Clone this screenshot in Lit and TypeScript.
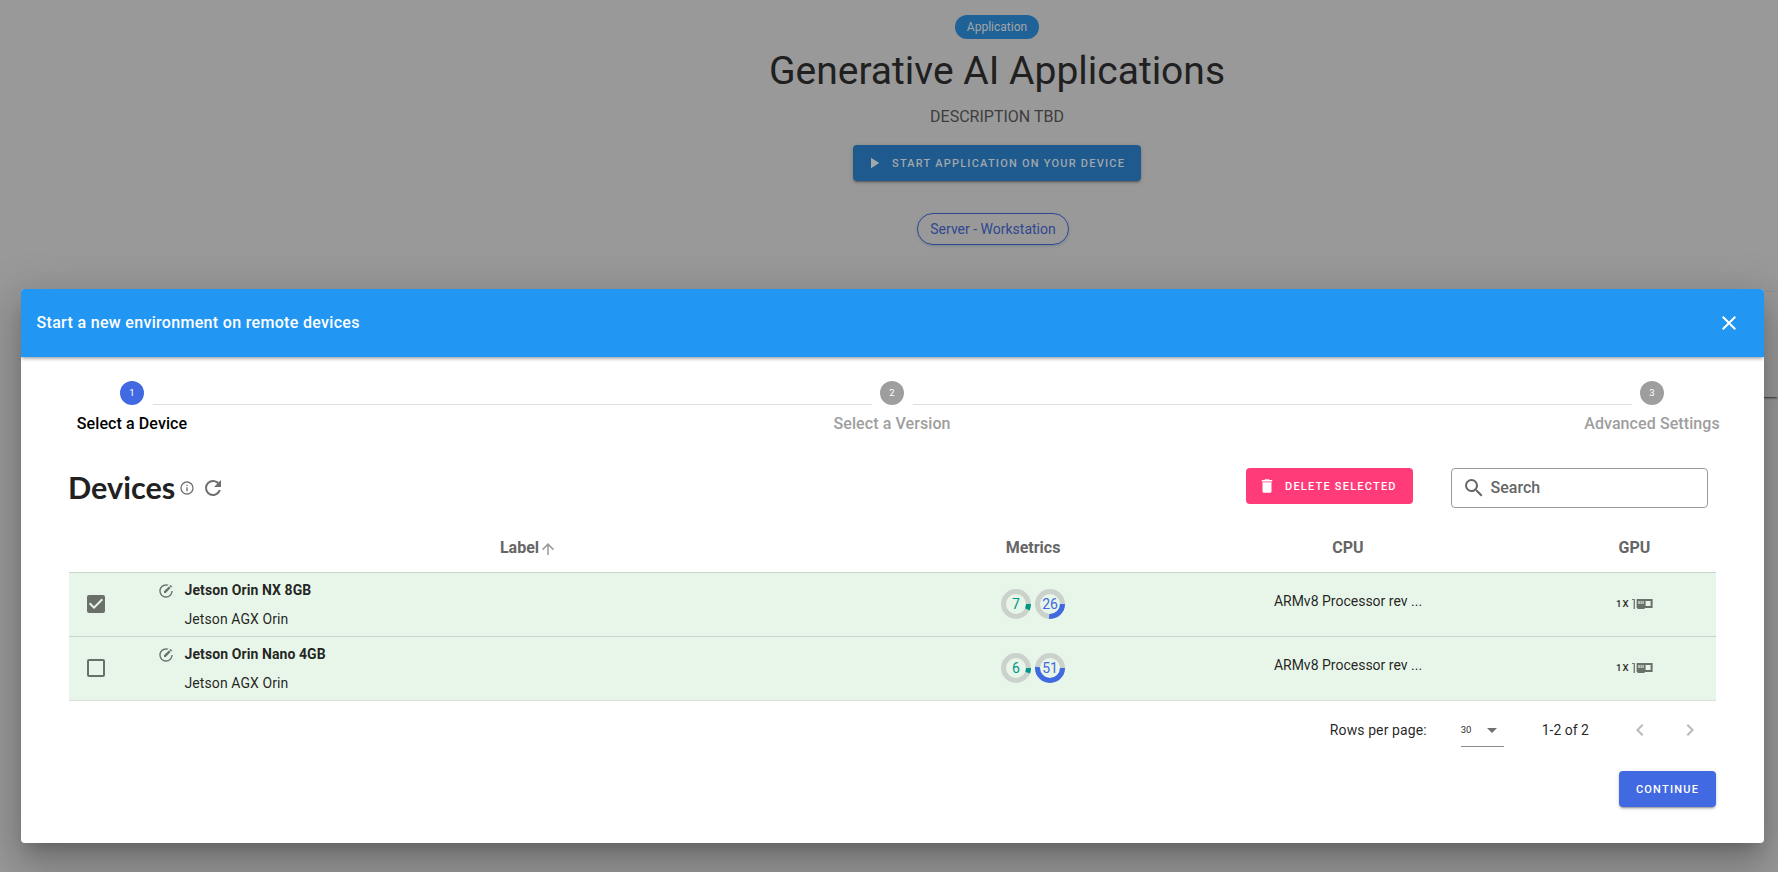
import { LitElement, html, css, svg } from "lit";
import { customElement } from "lit/decorators.js";

const icons = {
  play: "M8,5.14V19.14L19,12.14L8,5.14Z",
  close: "M19,6.41L17.59,5L12,10.59L6.41,5L5,6.41L10.59,12L5,17.59L6.41,19L12,13.41L17.59,19L19,17.59L13.41,12L19,6.41Z",
  info: "M11,9H13V7H11M12,20C7.59,20 4,16.41 4,12C4,7.59 7.59,4 12,4C16.41,4 20,7.59 20,12C20,16.41 16.41,20 12,20M12,2A10,10 0 0,0 2,12A10,10 0 0,0 12,22A10,10 0 0,0 22,12A10,10 0 0,0 12,2M11,17H13V11H11V17Z",
  refresh: "M17.65,6.35C16.2,4.9 14.21,4 12,4A8,8 0 0,0 4,12A8,8 0 0,0 12,20C15.73,20 18.84,17.45 19.73,14H17.65C16.83,16.33 14.61,18 12,18A6,6 0 0,1 6,12A6,6 0 0,1 12,6C13.66,6 15.14,6.69 16.22,7.78L13,11H20V4L17.65,6.35Z",
  trash: "M19,4H15.5L14.5,3H9.5L8.5,4H5V6H19M6,19A2,2 0 0,0 8,21H16A2,2 0 0,0 18,19V7H6V19Z",
  search: "M9.5,3A6.5,6.5 0 0,1 16,9.5C16,11.11 15.41,12.59 14.44,13.73L14.71,14H15.5L20.5,19L19,20.5L14,15.5V14.71L13.73,14.44C12.59,15.41 11.11,16 9.5,16A6.5,6.5 0 0,1 3,9.5A6.5,6.5 0 0,1 9.5,3M9.5,5C7,5 5,7 5,9.5C5,12 7,14 9.5,14C12,14 14,12 14,9.5C14,7 12,5 9.5,5Z",
  up: "M13,20H11V8L5.5,13.5L4.08,12.08L12,4.16L19.92,12.08L18.5,13.5L13,8V20Z",
  checked: "M10,17L5,12L6.41,10.58L10,14.17L17.59,6.58L19,8M19,3H5C3.89,3 3,3.89 3,5V19A2,2 0 0,0 5,21H19A2,2 0 0,0 21,19V5C21,3.89 20.1,3 19,3Z",
  blank: "M19,3H5C3.89,3 3,3.89 3,5V19A2,2 0 0,0 5,21H19A2,2 0 0,0 21,19V5C21,3.89 20.1,3 19,3M19,5V19H5V5H19Z",
  edit: "M12,2C6.47,2 2,6.47 2,12C2,17.53 6.47,22 12,22C17.53,22 22,17.53 22,12H20C20,16.42 16.42,20 12,20C7.58,20 4,16.42 4,12C4,7.58 7.58,4 12,4C12.76,4 13.5,4.11 14.2,4.31L15.77,2.74C14.61,2.26 13.34,2 12,2M18.78,3C18.61,3 18.43,3.07 18.3,3.2L17.08,4.41L19.58,6.91L20.8,5.7C21.06,5.44 21.06,5 20.8,4.75L19.25,3.2C19.12,3.07 18.95,3 18.78,3M16.37,5.12L9,12.5V15H11.5L18.87,7.62L16.37,5.12Z",
  down: "M7,10L12,15L17,10H7Z",
  left: "M15.41,16.58L10.83,12L15.41,7.41L14,6L8,12L14,18L15.41,16.58Z",
  right: "M8.59,16.58L13.17,12L8.59,7.41L10,6L16,12L10,18L8.59,16.58Z",
};

const icon = (name: keyof typeof icons, size = 24, cls = "") => html`
  <svg class="icon ${cls}" width=${size} height=${size} viewBox="0 0 24 24"><path d=${icons[name]} /></svg>`;

const gpuCard = () => html`
  <svg class="icon gpu" width="21" height="10" viewBox="0 0 21 10">
    <path d="M0 0H3V10H1.6V1H0Z" opacity=".9" />
    <path fill-rule="evenodd" d="M4.6 0H20.6V9H12.6V10H5.4V9H4.6ZM6.4 2V5H7.6V2ZM8.6 2V5H9.6V2ZM10.6 2V5H11.6V2ZM13.6 2V7H18.6V2Z" />
  </svg>`;

const ring = (value: number, cls: string) => {
  const r = 12.5;
  const len = 2 * Math.PI * r;
  return html`<span class="ring ${cls}">
    <svg width="30" height="30" viewBox="0 0 30 30">
      ${svg`<circle class="track" cx="15" cy="15" r=${r} />
      <circle class="value" cx="15" cy="15" r=${r} stroke-dasharray="${(len * value) / 100} ${len}" />`}
    </svg><span class="num">${value}</span></span>`;
};

interface Device { name: string; model: string; checked: boolean; cpu: number; mem: number; }

const devices: Device[] = [
  { name: "Jetson Orin NX 8GB", model: "Jetson AGX Orin", checked: true, cpu: 7, mem: 26 },
  { name: "Jetson Orin Nano 4GB", model: "Jetson AGX Orin", checked: false, cpu: 6, mem: 51 },
];

@customElement("app-root")
export class AppRoot extends LitElement {
  static styles = css`
    :host { display: block; position: relative; height: 872px; overflow: hidden; background: #999;
      font-family: Roboto, sans-serif; color: rgba(0,0,0,.87); font-size: 16px; line-height: 24px; }
    * { box-sizing: border-box; }
    .icon { display: block; fill: currentColor; flex: none; }
    .page { display: flex; flex-direction: column; align-items: center; width: 454px; margin-left: 770px; padding-top: 15px; }
    .chip { height: 24px; border-radius: 12px; padding: 0 12px; background: #1f6298; color: #a5a5a5; font-size: 12px; }
    .title { margin: 8px 0 0; font-size: 39px; line-height: 48px; font-weight: 400; color: #202020; white-space: nowrap; }
    .desc { margin: 10px 0 0; color: #3d3d3d; }
    .btn { display: flex; align-items: center; height: 36px; border-radius: 4px; font-size: 11px; font-weight: 500;
      letter-spacing: 1.22px; text-transform: uppercase; white-space: nowrap; }
    .btn span { padding-top: 1px; }
    .raised { box-shadow: 0 3px 1px -2px rgba(0,0,0,.2), 0 2px 2px 0 rgba(0,0,0,.14), 0 1px 5px 0 rgba(0,0,0,.12); }
    .start { width: 288px; margin-top: 16px; padding-left: 12px; gap: 9px; background: #1e5a8d; color: #a0a7ad; }
    .tag { height: 32px; margin: 32px 8px 0 0; padding: 0 12.5px; border: 1px solid #304790; border-radius: 16px; color: #304790;
      font-size: 14px; line-height: 30px; box-shadow: 0 1px 3px rgba(0,80,110,.25); }
    .behind { position: absolute; right: 0; top: 292px; width: 120px; height: 105px; background: #999;
      box-shadow: 0 3px 1px -2px rgba(0,0,0,.3), 0 2px 2px rgba(0,0,0,.2), 0 0 2px rgba(0,0,0,.15); }
    .dialog { position: absolute; left: 21px; top: 289px; width: 1743px; height: 554px; border-radius: 4px; overflow: hidden;
      background: #fff; }
    .shade { position: absolute; left: 21px; top: 289px; width: 1743px; height: 554px; border-radius: 4px;
      box-shadow: 0 11px 15px -7px rgba(0,0,0,.2), 0 24px 38px 3px rgba(0,0,0,.14), 0 9px 46px 8px rgba(0,0,0,.12); }
    .bar { position: relative; display: flex; align-items: center; justify-content: space-between; height: 68px; padding: 0 22.6px 0 15.5px;
      background: #2196f3; color: #fff; box-shadow: 0 2px 4px -1px rgba(0,0,0,.3), 0 1px 4px rgba(0,0,0,.2); }
    .heading { font-size: 16px; font-weight: 500; letter-spacing: .32px; }
    .steps { display: flex; justify-content: space-between; margin: 24px 24.5px 0 23.5px; }
    .step { width: 175px; flex: none; display: flex; flex-direction: column; align-items: center; color: #9e9e9e; font-weight: 500; gap: 7px; white-space: nowrap; letter-spacing: .09px; }
    .dot { width: 24px; height: 24px; border-radius: 50%; background: #9e9e9e; color: #fff; font-size: 9.6px; font-weight: 400; text-align: center; line-height: 23px; }
    .active { color: #000; }
    .active .dot { background: #4169e1; }
    .line { flex: 1; height: 1px; margin: 23px -67px 0; background: #dedede; }
    .body { padding: 0 48px; }
    .tools { display: flex; align-items: flex-start; height: 55px; margin-top: 32px; }
    .h1 { margin: 0 0 0 -1px; font: 700 30.6px/36px Lato, sans-serif; color: #212121; padding-top: 2px; }
    .grey { color: #6f6f6f; }
    .i1 { margin: 12px 0 0 3.5px; }
    .i2 { margin: 8px 0 0 6px; }
    .delete { margin-left: auto; width: 167px; padding-left: 12px; gap: 9px; background: #ff3b79; color: #fff; }
    .search { display: flex; align-items: center; gap: 5px; width: 257px; height: 40px; margin: 0 8px 0 38px; padding-left: 9.5px;
      border: 1px solid #999; border-radius: 4px; color: #666; font-weight: 500; }
    .row { display: grid; grid-template-columns: 55px 799px 220px 410px 163px; height: 64px; border-top: 1px solid #c9d5ca; background: #e8f5e9; width: 1647px; font-size: 14px; }
    .last { height: 65px; border-bottom: 1px solid #dcdedc; }
    .head { height: 49px; background: none; border: 0; font-size: 16px; font-weight: 700; color: #666; align-items: center; }
    .head > * { display: flex; justify-content: center; }
    .head .first { padding-left: 10px; }
    .sort { margin-top: 4px; color: #999; }
    .check { display: flex; align-items: center; justify-content: center; color: #697069; padding: 0 1px 2px 0; }
    .label { display: flex; padding: 9px 0 0 34px; gap: 10.5px; letter-spacing: .09px; }
    .label .icon { color: #697069; margin-top: 1px; }
    .name { font-weight: 700; line-height: 16px; }
    .model { line-height: 20px; margin-top: 11px; }
    .metrics { display: flex; gap: 4px; align-items: center; justify-content: center; padding-bottom: 1px; }
    .ring { position: relative; display: grid; width: 30px; height: 30px; place-items: center; }
    .ring > * { grid-area: 1 / 1; }
    .ring circle { fill: none; stroke-width: 5; }
    .track { stroke: #cbd2cb; }
    .teal { color: #009688; }
    .blue { color: #4169e1; }
    .value { stroke: currentColor; }
    .num { line-height: 14px; }
    .cpu { display: flex; justify-content: center; padding-top: 16px; }
    .gpus { display: flex; align-items: center; justify-content: center; gap: 2.5px; font-size: 9.6px; font-weight: 500; letter-spacing: 1.1px; padding-bottom: 1px; }
    .gpu { color: #697069; }
    .foot { display: flex; align-items: center; height: 57px; margin-bottom: 2px; font-size: 14px; padding-right: 14.5px; }
    .rpp { margin-left: auto; letter-spacing: .1px; }
    .select { display: flex; align-items: center; justify-content: space-between; width: 43px; height: 32px; margin: 2px 38px 0 34px;
      border-bottom: 1px solid #8b8b8b; font-size: 9.6px; color: #333; }
    .select .icon { color: #707070; }
    .pager { display: flex; gap: 26px; margin-left: 38.5px; color: #b9b9b9; }
    .continue { width: 97px; justify-content: center; margin: 13px 0 0 auto; background: #4169e1; color: #fff; }
  `;

  render() {
    return html`
      <div class="page">
        <div class="chip">Application</div>
        <h1 class="title">Generative AI Applications</h1>
        <p class="desc">DESCRIPTION TBD</p>
        <div class="btn raised start">${icon("play", 18)}<span>Start application on your device</span></div>
        <div class="tag">Server - Workstation</div>
      </div>
      <div class="behind"></div>
      <div class="shade"></div>
      <div class="dialog">
        <div class="bar"><span class="heading">Start a new environment on remote devices</span>${icon("close")}</div>
        <div class="steps">
          <div class="step active"><span class="dot">1</span><span>Select a Device</span></div>
          <div class="line"></div>
          <div class="step"><span class="dot">2</span><span>Select a Version</span></div>
          <div class="line"></div>
          <div class="step"><span class="dot">3</span><span>Advanced Settings</span></div>
        </div>
        <div class="body">
          <div class="tools">
            <h2 class="h1">Devices</h2>
            ${icon("info", 16, "grey i1")}${icon("refresh", 24, "grey i2")}
            <div class="btn delete">${icon("trash", 18)}<span>Delete selected</span></div>
            <div class="search">${icon("search", 24)}<span>Search</span></div>
          </div>
          <div class="row head"><span></span><span class="first">Label${icon("up", 18, "sort")}</span><span>Metrics</span><span>CPU</span><span>GPU</span></div>
          ${devices.map((d, i) => html`
            <div class="row ${i === devices.length - 1 ? "last" : ""}">
              <div class="check">${icon(d.checked ? "checked" : "blank")}</div>
              <div class="label">${icon("edit", 16)}<div><div class="name">${d.name}</div><div class="model">${d.model}</div></div></div>
              <div class="metrics">${ring(d.cpu, "teal")}${ring(d.mem, "blue")}</div>
              <div class="cpu">ARMv8 Processor rev ...</div>
              <div class="gpus"><span>1X</span>${gpuCard()}</div>
            </div>`)}
          <div class="foot">
            <span class="rpp">Rows per page:</span>
            <div class="select"><span>30</span>${icon("down", 24)}</div>
            <span>1-2 of 2</span>
            <div class="pager">${icon("left")}${icon("right")}</div>
          </div>
          <div class="btn raised continue"><span>Continue</span></div>
        </div>
      </div>`;
  }
}
